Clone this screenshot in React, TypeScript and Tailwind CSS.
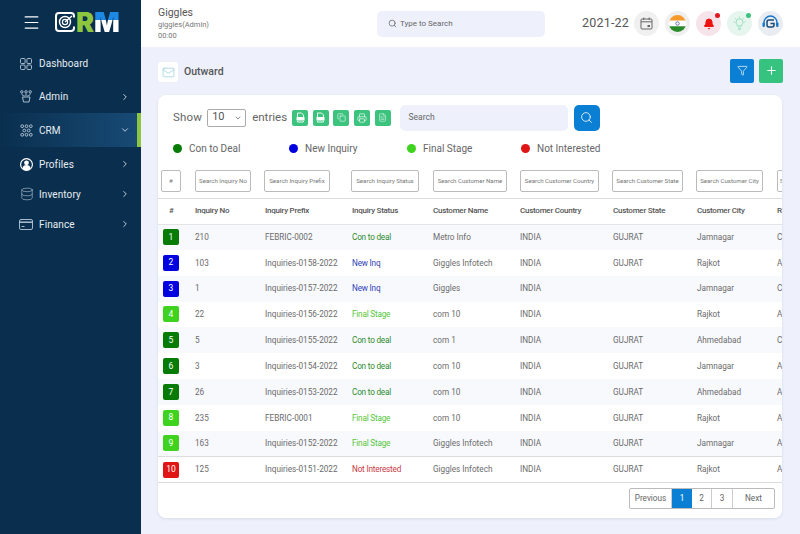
import { Bell, ChevronDown, ChevronRight, Copy, Database, Filter, FileText, Mail, Menu, Plus, Printer, Search } from "lucide-react";

const font = "font-['Roboto',sans-serif]";

type Status = "deal" | "new" | "final" | "not";

const statusLabel: Record<Status, string> = {
  deal: "Con to deal",
  new: "New Inq",
  final: "Final Stage",
  not: "Not Interested",
};

const statusText: Record<Status, string> = {
  deal: "text-[#2c8a2c]",
  new: "text-[#2f3fb8]",
  final: "text-[#55c53a]",
  not: "text-[#c9383f]",
};

const statusBadge: Record<Status, string> = {
  deal: "bg-[#067c06]",
  new: "bg-[#0202e0]",
  final: "bg-[#3fd21f]",
  not: "bg-[#e01515]",
};

const rows: { no: string; prefix: string; status: Status; name: string; state: string; city: string; last: string }[] = [
  { no: "210", prefix: "FEBRIC-0002", status: "deal", name: "Metro Info", state: "GUJRAT", city: "Jamnagar", last: "C" },
  { no: "103", prefix: "Inquiries-0158-2022", status: "new", name: "Giggles Infotech", state: "GUJRAT", city: "Rajkot", last: "A" },
  { no: "1", prefix: "Inquiries-0157-2022", status: "new", name: "Giggles", state: "", city: "Jamnagar", last: "C" },
  { no: "22", prefix: "Inquiries-0156-2022", status: "final", name: "com 10", state: "", city: "Rajkot", last: "A" },
  { no: "5", prefix: "Inquiries-0155-2022", status: "deal", name: "com 1", state: "GUJRAT", city: "Ahmedabad", last: "C" },
  { no: "3", prefix: "Inquiries-0154-2022", status: "deal", name: "com 10", state: "GUJRAT", city: "Jamnagar", last: "A" },
  { no: "26", prefix: "Inquiries-0153-2022", status: "deal", name: "com 10", state: "GUJRAT", city: "Ahmedabad", last: "A" },
  { no: "235", prefix: "FEBRIC-0001", status: "final", name: "com 10", state: "GUJRAT", city: "Rajkot", last: "A" },
  { no: "163", prefix: "Inquiries-0152-2022", status: "final", name: "Giggles Infotech", state: "GUJRAT", city: "Jamnagar", last: "A" },
  { no: "125", prefix: "Inquiries-0151-2022", status: "not", name: "Giggles Infotech", state: "GUJRAT", city: "Rajkot", last: "A" },
];

const filters = [
  { label: "#", w: "w-[20px] ml-[3px]" },
  { label: "Search Inquiry No", w: "w-[56px]" },
  { label: "Search Inquiry Prefix", w: "w-[66px] -ml-[1px]" },
  { label: "Search Inquiry Status", w: "w-[68px] -ml-[1px]" },
  { label: "Search Customer Name", w: "w-[74px]" },
  { label: "Search Customer Country", w: "w-[79px]" },
  { label: "Search Customer State", w: "w-[71px] -ml-[1px]" },
  { label: "Search Customer City", w: "w-[67px] -ml-[1px]" },
  { label: "Search Remark Details", w: "w-[67px]" },
];

const headers = ["Inquiry No", "Inquiry Prefix", "Inquiry Status", "Customer Name", "Customer Country", "Customer State", "Customer City", "Remark"];

const legend = [
  { label: "Con to Deal", dot: "bg-[#067c06]", w: "w-[116px]" },
  { label: "New Inquiry", dot: "bg-[#0202e0]", w: "w-[118px]" },
  { label: "Final Stage", dot: "bg-[#3fd21f]", w: "w-[114px]" },
  { label: "Not Interested", dot: "bg-[#e01515]", w: "w-[90px]" },
];

function NavItem({ icon, label, height, active, open }: { icon: React.ReactNode; label: string; height: string; active?: boolean; open?: boolean }) {
  return (
    <div className={`flex items-center pl-[20px] ${height} ${active ? "bg-gradient-to-r from-[#0a2f4e] to-[#174a75] border-r-4 border-[#8cc63f] pr-[7px]" : "pr-[11px]"}`}>
      <span className="w-[19px] flex justify-start text-[#b9cbdb]">{icon}</span>
      <span className="text-[10px] text-[#e6edf3] tracking-[0.1px]">{label}</span>
      {open !== undefined && (
        <span className="ml-auto text-[#dfe7ee]">
          {open ? <ChevronDown size={10} /> : <ChevronRight size={10} />}
        </span>
      )}
    </div>
  );
}

function RoundIcon({ bg, dot, children }: { bg: string; dot?: string; children: React.ReactNode }) {
  return (
    <div className={`relative w-[25px] h-[25px] rounded-full flex items-center justify-center ${bg}`}>
      {children}
      {dot && <span className={`absolute top-[2px] right-[1px] w-[5px] h-[5px] rounded-full ${dot}`} />}
    </div>
  );
}

// file outline with a filled band across it, the csv / excel export buttons
function FileBand() {
  return (
    <svg width="11" height="11" viewBox="0 0 11 11" fill="none" stroke="#fff" strokeWidth="0.9">
      <path d="M2.500 5V1h4l2 2v2M2.500 9v1h6V9" />
      <rect x="1.500" y="5" width="8" height="3.600" rx="0.500" fill="#fff" stroke="none" />
    </svg>
  );
}

export default function App() {
  return (
    <div className={`${font} flex w-[800px] h-[534px] overflow-hidden bg-[#eef1fb]`}>
      {/* Sidebar */}
      <aside className="w-[141px] shrink-0 bg-[#0a2f4e]">
        <div className="h-[47px] flex items-center pl-[22px] gap-[14px]">
          <Menu size={19} className="text-white -mt-[3px]" strokeWidth={1.5} />
          <div className="flex items-center h-[20px] -mt-[3px] leading-none font-['Inter',sans-serif]">
            <svg width="21" height="20" viewBox="0 0 21 20" className="shrink-0">
              <path d="M19 5.500V4a3 3 0 0 0-3-3H4a3 3 0 0 0-3 3v12a3 3 0 0 0 3 3h12a3 3 0 0 0 3-3v-1.500" fill="none" stroke="#fff" strokeWidth="2" />
              <circle cx="10" cy="10" r="5.500" fill="none" stroke="#fff" strokeWidth="1.400" />
              <circle cx="10" cy="10" r="2.600" fill="none" stroke="#fff" strokeWidth="1.200" />
              <path d="M10 10 L17 4" stroke="#fff" strokeWidth="1.400" />
            </svg>
            <span className="text-[27px] font-black text-[#8cc63f]">R</span>
            <span className="text-[27px] font-black text-transparent bg-clip-text bg-[linear-gradient(180deg,#1e88e5_42%,#ffffff_42%)]">M</span>
          </div>
        </div>
        <NavItem
          icon={
            <svg width="12" height="12" viewBox="0 0 12 12" fill="none" stroke="currentColor" strokeWidth="0.9">
              <rect x="0.500" y="0.500" width="4.600" height="5" rx="1" />
              <rect x="6.900" y="0.500" width="4.600" height="5" rx="1" />
              <rect x="0.500" y="7" width="4.600" height="4.500" rx="1" />
              <rect x="6.900" y="7" width="4.600" height="4.500" rx="1" />
            </svg>
          }
          label="Dashboard"
          height="h-[33px]"
        />
        <NavItem
          icon={
            <svg width="12" height="13" viewBox="0 0 12 13" fill="none" stroke="currentColor" strokeWidth="0.9">
              <circle cx="1.800" cy="1.800" r="1.200" />
              <circle cx="6" cy="1.800" r="1.200" />
              <circle cx="10.200" cy="1.800" r="1.200" />
              <path d="M1.800 3.500c0 2 1.500 2 3 2.500M10.200 3.500c0 2-1.500 2-3 2.500M6 3.500V6" />
              <path d="M2.500 7h7.500L9 12H3.500Z" />
            </svg>
          }
          label="Admin"
          height="h-[33px]"
          open={false}
        />
        <NavItem
          icon={
            <svg width="13" height="13" viewBox="0 0 13 13" fill="none" stroke="currentColor" strokeWidth="0.9">
              <circle cx="2.200" cy="2.200" r="1.400" />
              <circle cx="6.500" cy="2.200" r="1.400" />
              <circle cx="10.800" cy="2.200" r="1.400" />
              <circle cx="4.300" cy="6.500" r="1.400" />
              <circle cx="8.700" cy="6.500" r="1.400" />
              <circle cx="2.200" cy="10.800" r="1.400" />
              <circle cx="6.500" cy="10.800" r="1.400" />
              <circle cx="10.800" cy="10.800" r="1.400" />
            </svg>
          }
          label="CRM"
          height="h-[34px]"
          active
          open
        />
        <NavItem
          icon={
            <svg width="13" height="13" viewBox="0 0 13 13">
              <circle cx="6.500" cy="6.500" r="6.500" fill="#fff" />
              <circle cx="6.500" cy="6.500" r="5.300" fill="#0a2f4e" />
              <circle cx="6.500" cy="4.800" r="2.400" fill="#fff" />
              <path d="M2.400 10.400a4.200 4.200 0 0 1 8.200 0a5.300 5.300 0 0 1-8.200 0Z" fill="#fff" />
            </svg>
          }
          label="Profiles"
          height="h-[30px] mt-[2px]"
          open={false}
        />
        <NavItem icon={<Database size={14} strokeWidth={1} />} label="Inventory" height="h-[30px]" open={false} />
        <NavItem
          icon={
            <svg width="14" height="11" viewBox="0 0 14 11" fill="none" stroke="currentColor" strokeWidth="0.9" className="-ml-[1px]">
              <rect x="0.500" y="0.500" width="13" height="10" rx="1.500" />
              <path d="M0.500 3.200h13" strokeWidth="1.400" />
              <path d="M2.500 7.500h3" />
            </svg>
          }
          label="Finance"
          height="h-[30px]"
          open={false}
        />
      </aside>

      <div className="flex-1 min-w-0 flex flex-col">
        {/* Top bar */}
        <header className="h-[47px] shrink-0 bg-white flex items-center pl-[17px] pr-[17px]">
          <div className="w-[219px] leading-none">
            <div className="text-[10.5px] text-[#555] mb-[3px]">Giggles</div>
            <div className="text-[7.5px] text-[#777] mb-[3px]">giggles(Admin)</div>
            <div className="text-[7.5px] text-[#777]">00:00</div>
          </div>
          <div className="w-[168px] h-[26px] rounded-[5px] bg-[#eef1fb] flex items-center pl-[11px] gap-[3px]">
            <Search size={9} className="text-[#666]" />
            <span className="text-[8px] text-[#666]">Type to Search</span>
          </div>
          <span className="ml-auto text-[12.5px] text-[#555] tracking-[0.2px] mr-[5px]">2021-22</span>
          <div className="flex gap-[6px]">
            <RoundIcon bg="bg-[#f0f0f0]">
              <svg width="13" height="13" viewBox="0 0 13 13" fill="none" stroke="#666" strokeWidth="1">
                <rect x="1" y="2" width="11" height="10" rx="1" />
                <path d="M1 4.800h11M3.800 0.500v2.500M9.200 0.500v2.500" />
                <rect x="7.500" y="8" width="2.500" height="2" fill="#666" stroke="none" />
              </svg>
            </RoundIcon>
            <RoundIcon bg="bg-[#efefef]">
              <svg width="17" height="17" viewBox="0 0 17 17">
                <clipPath id="flag"><circle cx="8.500" cy="8.500" r="8.500" /></clipPath>
                <g clipPath="url(#flag)">
                  <rect width="17" height="5.700" fill="#f79a2c" />
                  <rect y="5.700" width="17" height="5.700" fill="#fff" />
                  <rect y="11.300" width="17" height="5.700" fill="#2a8a2a" />
                  <circle cx="8.500" cy="8.500" r="1.700" fill="none" stroke="#33458c" strokeWidth="0.700" />
                </g>
              </svg>
            </RoundIcon>
            <RoundIcon bg="bg-[#f6e4ea]" dot="bg-[#e01520]">
              <Bell size={12} className="text-[#ee1111]" fill="#ee1111" />
            </RoundIcon>
            <RoundIcon bg="bg-[#e6f5ee]" dot="bg-[#3cc47f]">
              <svg width="15" height="15" viewBox="0 0 15 15" fill="none" stroke="#7fd8ad" strokeWidth="0.8">
                <path d="M5.500 10c0-1.500-1.500-2-1.500-3.800a3.500 3.500 0 0 1 7 0C11 8 9.500 8.500 9.500 10Z" />
                <path d="M6 12h3M6.500 13.500h2M7.500 0.500v1M1.500 6h1M12.500 6h1M3 2l.8.8M12 2l-.8.8" />
              </svg>
            </RoundIcon>
            <RoundIcon bg="bg-[#e9edf2]">
              <svg width="19" height="19" viewBox="0 0 19 19" fill="none">
                <path d="M3 11V8.500a6.500 6.500 0 0 1 13 0V11" stroke="#1976c9" strokeWidth="1.400" />
                <rect x="1.500" y="8.500" width="2.400" height="4.500" rx="1" fill="#1976c9" />
                <rect x="15.100" y="8.500" width="2.400" height="4.500" rx="1" fill="#1976c9" />
                <path d="M13 6H8a2 2 0 0 0-2 2v3a2 2 0 0 0 2 2h3a2 2 0 0 0 2-2V9.600H9.500" stroke="#164a78" strokeWidth="1.500" />
              </svg>
            </RoundIcon>
          </div>
        </header>

        {/* Page title */}
        <div className="h-[48px] shrink-0 flex items-center pl-[17px] pr-[17px]">
          <div className="w-[20px] h-[20px] mt-[2px] bg-white rounded-[3px] flex items-center justify-center">
            <Mail size={13} className="text-[#7fc4cf]" strokeWidth={1.1} />
          </div>
          <span className="ml-[6px] mt-[2px] text-[10.5px] font-medium text-[#555]">Outward</span>
          <div className="ml-auto flex gap-[5px] -mt-[1px]">
            <button className="w-[24px] h-[24px] rounded-[2px] bg-[#0b7fd4] flex items-center justify-center">
              <Filter size={11} className="text-white" strokeWidth={1.5} />
            </button>
            <button className="w-[24px] h-[24px] rounded-[2px] bg-[#35c37f] flex items-center justify-center">
              <Plus size={13} className="text-white" strokeWidth={2} />
            </button>
          </div>
        </div>

        {/* Card */}
        <div className="ml-[17px] mr-[18px] h-[423px] bg-white rounded-[8px] shadow-[0_1px_3px_rgba(60,70,120,0.12)] overflow-hidden flex flex-col">
          <div className="h-[35px] shrink-0 mt-[5px] flex items-center pl-[15px]">
            <span className="text-[11.5px] text-[#666] tracking-[0.2px]">Show</span>
            <div className="ml-[5px] w-[39px] h-[18px] border border-[#aaa] rounded-[2px] flex items-center justify-between pl-[4px] pr-[3px]">
              <span className="text-[11px] text-[#555]">10</span>
              <ChevronDown size={8} className="text-[#555]" />
            </div>
            <span className="ml-[6px] w-[35px] text-[11.5px] text-[#666] whitespace-nowrap">entries</span>
            <div className="ml-[5px] flex gap-[4.6px]">
              <div className="w-[16px] h-[16px] rounded-[2px] bg-[#3cc47f] flex items-center justify-center"><FileBand /></div>
              <div className="w-[16px] h-[16px] rounded-[2px] bg-[#3cc47f] flex items-center justify-center"><FileBand /></div>
              <div className="w-[16px] h-[16px] rounded-[2px] bg-[#3cc47f] flex items-center justify-center"><Copy size={9} className="text-white" strokeWidth={1.5} /></div>
              <div className="w-[16px] h-[16px] rounded-[2px] bg-[#3cc47f] flex items-center justify-center"><Printer size={10} className="text-white" strokeWidth={1.5} /></div>
              <div className="w-[16px] h-[16px] rounded-[2px] bg-[#3cc47f] flex items-center justify-center"><FileText size={9} className="text-white" strokeWidth={1.3} /></div>
            </div>
            <div className="ml-[9px] w-[168px] h-[26px] rounded-[5px] bg-[#eef1fb] flex items-center pl-[9px]">
              <span className="text-[8.5px] text-[#666]">Search</span>
            </div>
            <button className="ml-[6px] w-[26px] h-[26px] rounded-[5px] bg-[#0b7fd4] flex items-center justify-center">
              <Search size={13} className="text-white" strokeWidth={1.5} />
            </button>
          </div>

          <div className="h-[18px] mt-[4px] shrink-0 flex items-center pl-[15px]">
            {legend.map((l) => (
              <div key={l.label} className={`flex items-center gap-[7px] ${l.w}`}>
                <span className={`w-[9px] h-[9px] rounded-full ${l.dot}`} />
                <span className="text-[10px] text-[#666]">{l.label}</span>
              </div>
            ))}
          </div>

          <div className="overflow-hidden mt-[3px]">
            <table className="table-fixed border-collapse w-[680px] text-[8.2px] text-[#6b6b6b]">
              <colgroup>
                <col className="w-[37px]" />
                <col className="w-[70px]" />
                <col className="w-[87px]" />
                <col className="w-[81px]" />
                <col className="w-[87px]" />
                <col className="w-[93px]" />
                <col className="w-[84px]" />
                <col className="w-[80px]" />
                <col className="w-[61px]" />
              </colgroup>
              <thead>
                <tr className="h-[38px] border-b border-[#dcdcdc]">
                  {filters.map((f) => (
                    <th key={f.label} className="p-0 text-left font-normal">
                      <div className={`${f.w} h-[22px] mt-[4px] border border-[#bbb] rounded-[2px] flex items-center justify-center text-[6.1px] text-[#777] whitespace-nowrap overflow-hidden`}>
                        {f.label}
                      </div>
                    </th>
                  ))}
                </tr>
                <tr className="h-[26px] border-b border-[#e4e4e4] text-[8px] tracking-[-0.25px] text-[#555]">
                  <th className="p-0 pl-[11px] text-left font-medium">#</th>
                  {headers.map((h) => (
                    <th key={h} className="p-0 text-left font-medium whitespace-nowrap overflow-hidden">{h}</th>
                  ))}
                </tr>
              </thead>
              <tbody>
                {rows.map((r, i) => (
                  <tr key={r.prefix} className={`h-[25.85px] ${i === 9 ? "border-y border-[#dcdcdc]" : ""} ${i % 2 === 0 && i !== 9 ? "bg-[#f8f9fd]" : ""}`}>
                    <td className="p-0 pl-[5px]">
                      <div className={`w-[16px] h-[16px] rounded-[2px] flex items-center justify-center text-[8.5px] text-white ${statusBadge[r.status]}`}>{i + 1}</div>
                    </td>
                    <td className="p-0">{r.no}</td>
                    <td className="p-0 whitespace-nowrap">{r.prefix}</td>
                    <td className={`p-0 whitespace-nowrap tracking-[-0.2px] ${statusText[r.status]}`}>{statusLabel[r.status]}</td>
                    <td className="p-0 whitespace-nowrap">{r.name}</td>
                    <td className="p-0">INDIA</td>
                    <td className="p-0">{r.state}</td>
                    <td className="p-0">{r.city}</td>
                    <td className="p-0">{r.last}</td>
                  </tr>
                ))}
              </tbody>
            </table>
          </div>

          {/* Pagination */}
          <div className="flex justify-end pr-[7px] mt-[5px]">
            <div className="flex h-[21px] border border-[#bbb] rounded-[2px] text-[8.2px] text-[#666]">
              <span className="w-[42px] flex items-center justify-center border-r border-[#ccc]">Previous</span>
              <span className="w-[20px] flex items-center justify-center bg-[#0b7fd4] text-white">1</span>
              <span className="w-[20px] flex items-center justify-center border-r border-[#ccc]">2</span>
              <span className="w-[21px] flex items-center justify-center border-r border-[#ccc]">3</span>
              <span className="w-[41px] flex items-center justify-center">Next</span>
            </div>
          </div>
        </div>
      </div>
    </div>
  );
}
